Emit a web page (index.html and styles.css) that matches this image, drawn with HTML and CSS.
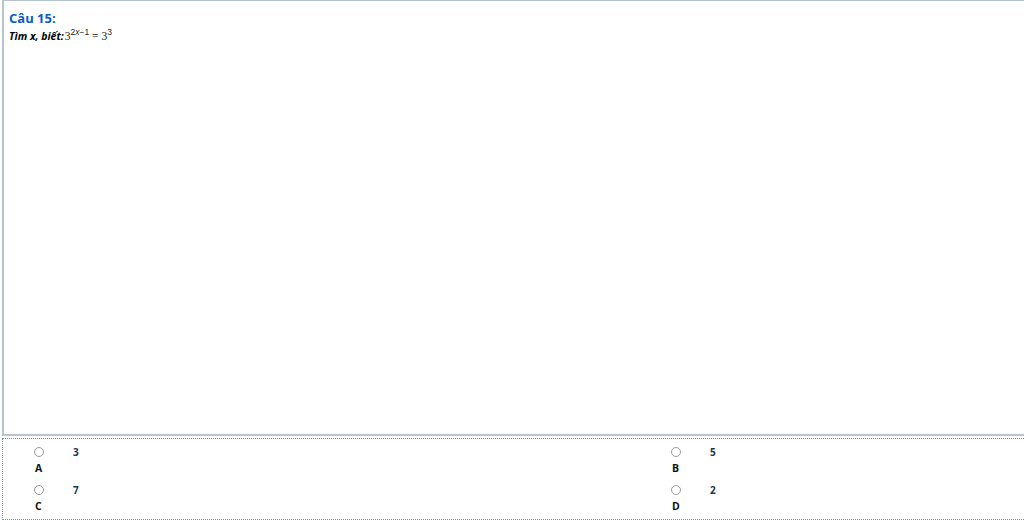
FILE: index.html
```
<!DOCTYPE html>
<html>
<head>
<meta charset="utf-8">
<link rel="stylesheet" href="styles.css">
</head>
<body>
<div class="question">
  <div class="title">Câu 15:</div>
  <div class="text"><span class="lead">Tìm x, biết:</span><span class="math">3<sup>2<i>x</i>−1</sup> = 3<sup>3</sup></span></div>
</div>
<div class="answers">
  <div class="opt">
    <div class="row"><span class="radio"></span><span class="val">3</span></div>
    <div class="letter">A</div>
  </div>
  <div class="opt">
    <div class="row"><span class="radio"></span><span class="val">5</span></div>
    <div class="letter">B</div>
  </div>
  <div class="opt">
    <div class="row"><span class="radio"></span><span class="val">7</span></div>
    <div class="letter">C</div>
  </div>
  <div class="opt">
    <div class="row"><span class="radio"></span><span class="val">2</span></div>
    <div class="letter">D</div>
  </div>
</div>
</body>
</html>
```
FILE: styles.css
```
html, body { margin: 0; padding: 0; background: #fff; }
body { font-family: "Open Sans", "Noto Sans", sans-serif; width: 1024px; height: 520px; overflow: hidden; }
.question {
  margin-left: 2px;
  width: 1030px;
  height: 436px;
  border: 2px solid #b5c3d1;
  border-top-width: 1px;
  box-sizing: border-box;
  padding: 9px 0 0 5px;
}
.title { color: #0b5cc4; font-weight: 700; font-size: 13px; line-height: 16px; }
.text { font-size: 10.5px; line-height: 16px; margin-top: 2px; color: #000; }
.lead { font-weight: 700; font-style: italic; }
.math { font-family: "Liberation Serif", serif; font-size: 11.5px; color: #222; margin-left: 1px; }
.math sup { font-size: 8.5px; line-height: 0; font-family: "Liberation Sans", sans-serif; }
.answers {
  margin: 2px 0 0 2px;
  width: 1030px;
  height: 82px;
  border: 1px dotted #6a9aa8;
  box-sizing: border-box;
  display: grid;
  grid-template-columns: 637px 1fr;
  grid-auto-rows: 38px;
  padding: 5px 0 0 29px;
}
.opt { display: flex; flex-direction: column; }
.row { display: flex; align-items: center; height: 16px; }
.radio { width: 8px; height: 8px; border: 1px solid #9a9a9a; border-radius: 50%; margin-left: 2px; }
.val { margin-left: 29px; font-size: 10px; font-weight: 700; color: #1b3550; }
.letter { font-size: 10.5px; font-weight: 700; color: #111; line-height: 14px; margin-top: 1px; margin-left: 3px; }
```
